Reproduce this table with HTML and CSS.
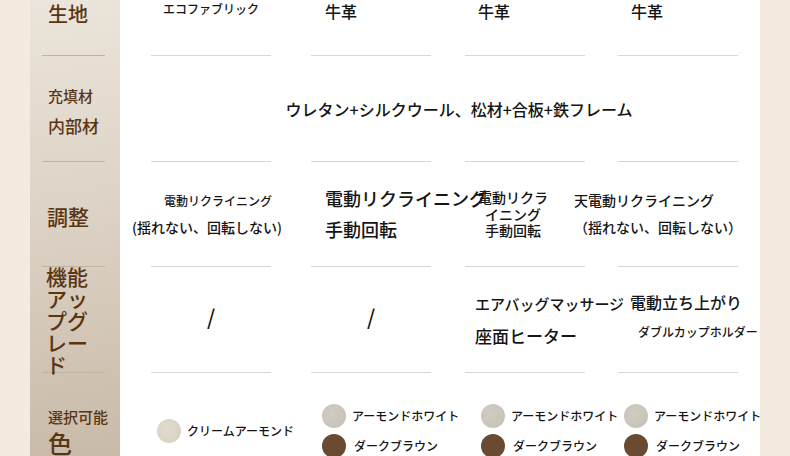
FILE: index.html
```html
<!DOCTYPE html>
<html lang="ja">

<head>
  <meta charset="UTF-8">
  <meta name="viewport" content="width=device-width, initial-scale=1.0">
  <title>仕様比較</title>
  <link rel="stylesheet" href="styles.css">
</head>

<body>
  <div class="sheet">

    <div class="row row-fabric">
      <div class="label"><div class="body"><p class="lb-20">生地</p></div></div>
      <div class="cell"><div class="body"><p class="t12">エコファブリック</p></div></div>
      <div class="cell"><div class="body left"><p class="t16">牛革</p></div></div>
      <div class="cell"><div class="body left l13"><p class="t16">牛革</p></div></div>
      <div class="cell"><div class="body left l13"><p class="t16">牛革</p></div></div>
    </div>

    <div class="row row-inner">
      <div class="label c0"><div class="body"><p class="lb-15">充填材</p><p class="lb-17">内部材</p></div></div>
      <div class="cell c1"><div class="body"></div></div>
      <div class="cell c2"><div class="body"></div></div>
      <div class="cell c3"><div class="body"></div></div>
      <div class="cell c4"><div class="body"></div></div>
      <div class="wide"><p class="t16">ウレタン+シルクウール、松材+合板+鉄フレーム</p></div>
    </div>

    <div class="row row-adjust">
      <div class="label"><div class="body"><p class="lb-21">調整</p></div></div>
      <div class="cell">
        <div class="body shift">
          <p class="t12 lh27 nudge">電動リクライニング</p>
          <p class="t14 lh27">(揺れない、回転しない)</p>
        </div>
      </div>
      <div class="cell">
        <div class="body left">
          <p class="t18 lh31">電動リクライニング</p>
          <p class="t18 lh31">手動回転</p>
        </div>
      </div>
      <div class="cell">
        <div class="body left">
          <p class="t14 narrow">電動リクライニング<br>手動回転</p>
        </div>
      </div>
      <div class="cell">
        <div class="body left">
          <p class="t14 lh27 pull">天電動リクライニング</p>
          <p class="t14 lh27 pull">（揺れない、回転しない）</p>
        </div>
      </div>
    </div>

    <div class="row row-upgrade">
      <div class="label"><div class="body"><p class="lb-21 stack">機能アップグレード</p></div></div>
      <div class="cell"><div class="body"><p class="t20 slash">/</p></div></div>
      <div class="cell"><div class="body"><p class="t20 slash">/</p></div></div>
      <div class="cell">
        <div class="body left l10">
          <p class="t15 lh32">エアバッグマッサージ</p>
          <p class="t17 lh32">座面ヒーター</p>
        </div>
      </div>
      <div class="cell">
        <div class="body left l12 raise">
          <p class="t16 lh30">電動立ち上がり</p>
          <p class="t12 lh30 step">ダブルカップホルダー</p>
        </div>
      </div>
    </div>

    <div class="row row-color">
      <div class="label"><div class="body top"><p class="lb-15">選択可能</p><p class="lb-24">色</p></div></div>
      <div class="cell">
        <div class="body top single">
          <div class="swatch-item"><span class="swatch cream"></span><span>クリームアーモンド</span></div>
        </div>
      </div>
      <div class="cell">
        <div class="body top l11">
          <div class="swatch-item"><span class="swatch almond"></span><span>アーモンドホワイト</span></div>
          <div class="swatch-item"><span class="swatch brown"></span><span class="gap8">ダークブラウン</span></div>
        </div>
      </div>
      <div class="cell">
        <div class="body top l16">
          <div class="swatch-item"><span class="swatch almond"></span><span>アーモンドホワイト</span></div>
          <div class="swatch-item"><span class="swatch brown"></span><span class="gap8">ダークブラウン</span></div>
        </div>
      </div>
      <div class="cell">
        <div class="body top l6">
          <div class="swatch-item"><span class="swatch almond"></span><span>アーモンドホワイト</span></div>
          <div class="swatch-item"><span class="swatch brown"></span><span class="gap8">ダークブラウン</span></div>
        </div>
      </div>
    </div>

  </div>
</body>

</html>
```

FILE: styles.css
```css
* {
  box-sizing: border-box;
  margin: 0;
  padding: 0;
}

body {
  background-color: #f3ebdf;
  font-family: "Noto Sans CJK JP", "Noto Sans", sans-serif;
  color: #151515;
  font-weight: 500;
  overflow: hidden;
  height: 456px;
}

.sheet {
  margin: 0 30px;
  background: linear-gradient(172deg, #ece5db 0%, #ddd3c6 45%, #c9baa8 100%) 0 0 / 90px 100% no-repeat, #fff;
  height: 456px;
  overflow: hidden;
}

.row {
  display: grid;
  grid-template-columns: 90px 160px 154px 153px 173px;
  grid-template-rows: minmax(0, 1fr);
  height: 106px;
}

.row-fabric {
  height: 56px;
}

.row-adjust {
  height: 105px;
}

.cell,
.label {
  display: flex;
  min-height: 0;
}

.body {
  width: 120px;
  margin-left: 31px;
  border-bottom: 1px solid #d6d6d6;
  display: flex;
  flex-direction: column;
  justify-content: center;
  align-items: center;
  white-space: nowrap;
}

.label .body {
  width: 63px;
  margin-left: 12px;
  border-bottom-color: #c2b4a3;
  align-items: flex-start;
  padding-left: 6px;
  color: #5a3513;
}

.row-fabric .body {
  justify-content: flex-start;
}

.row-fabric .label .body {
  padding-top: 2px;
}

.body.left {
  align-items: flex-start;
  padding-left: 14px;
}

.body.l13 { padding-left: 13px; }
.body.l12 { padding-left: 12px; }
.body.l10 { padding-left: 10px; }
.body.l11 { padding-left: 11px; }
.body.l16 { padding-left: 16px; }
.body.l6 { padding-left: 6px; }

.body.shift {
  padding-right: 8px;
}

.body.raise {
  padding-bottom: 6px;
}

/* row 2 : one value over all four columns */
.row-inner > * {
  grid-row: 1;
}

.c0 { grid-column: 1; }
.c1 { grid-column: 2; }
.c2 { grid-column: 3; }
.c3 { grid-column: 4; }
.c4 { grid-column: 5; }

.wide {
  grid-column: 2 / 6;
  display: flex;
  align-items: center;
  justify-content: center;
  padding-left: 38px;
}

.row-inner .label .body {
  padding-top: 5px;
}

/* label text */
.lb-15 { font-size: 15px; line-height: 30px; }
.lb-17 { font-size: 17px; line-height: 30px; }
.lb-20 { font-size: 20px; line-height: 24px; }
.lb-21 { font-size: 21px; line-height: 26px; }
.lb-24 { font-size: 24px; line-height: 28px; }

.stack {
  width: 46px;
  white-space: normal;
  line-height: 22px;
  margin-left: -2px;
}

.row-adjust .label .body {
  padding-left: 5px;
  padding-top: 4px;
}

/* value text */
.t12 { font-size: 12px; line-height: 18px; }
.t14 { font-size: 14px; line-height: 20px; }
.t15 { font-size: 15px; line-height: 20px; }
.t16 { font-size: 16px; line-height: 22px; }
.t17 { font-size: 17px; line-height: 22px; }
.t18 { font-size: 18px; line-height: 24px; }
.t20 { font-size: 21px; line-height: 26px; }

.lh27 { line-height: 27px; }
.lh30 { line-height: 30px; }
.lh31 { line-height: 31px; }
.lh32 { line-height: 32px; }

.slash {
  margin-bottom: 7px;
}

.nudge {
  margin-left: 22px;
}

.narrow {
  width: 78px;
  margin-left: -5px;
  white-space: normal;
  text-align: center;
  line-height: 16.5px;
}

.pull {
  margin-left: -58px;
}

.step {
  margin-left: 8px;
}

/* colour row */
.body.top {
  justify-content: flex-start;
  align-items: flex-start;
  padding-top: 31px;
  gap: 6px;
}

.label .body.top {
  padding-top: 32px;
  gap: 0;
}

.label .body.top .lb-15 {
  line-height: 24px;
}

.body.single {
  padding-left: 6px;
  padding-top: 46px;
}

.swatch-item {
  display: flex;
  align-items: center;
  gap: 6px;
  font-size: 12px;
  line-height: 24px;
}

.swatch {
  width: 24px;
  height: 24px;
  border-radius: 50%;
  flex: none;
}

.swatch.cream {
  background: radial-gradient(circle at 40% 40%, #e1dcd0 0%, #d9d3c6 70%, #cfc9bb 100%);
}

.swatch.almond {
  background: radial-gradient(circle at 40% 40%, #d0ccc2 0%, #c8c4b9 70%, #bcb7ab 100%);
}

.swatch.brown {
  background: #6b4a32;
}

.gap8 {
  margin-left: 2px;
}
```
